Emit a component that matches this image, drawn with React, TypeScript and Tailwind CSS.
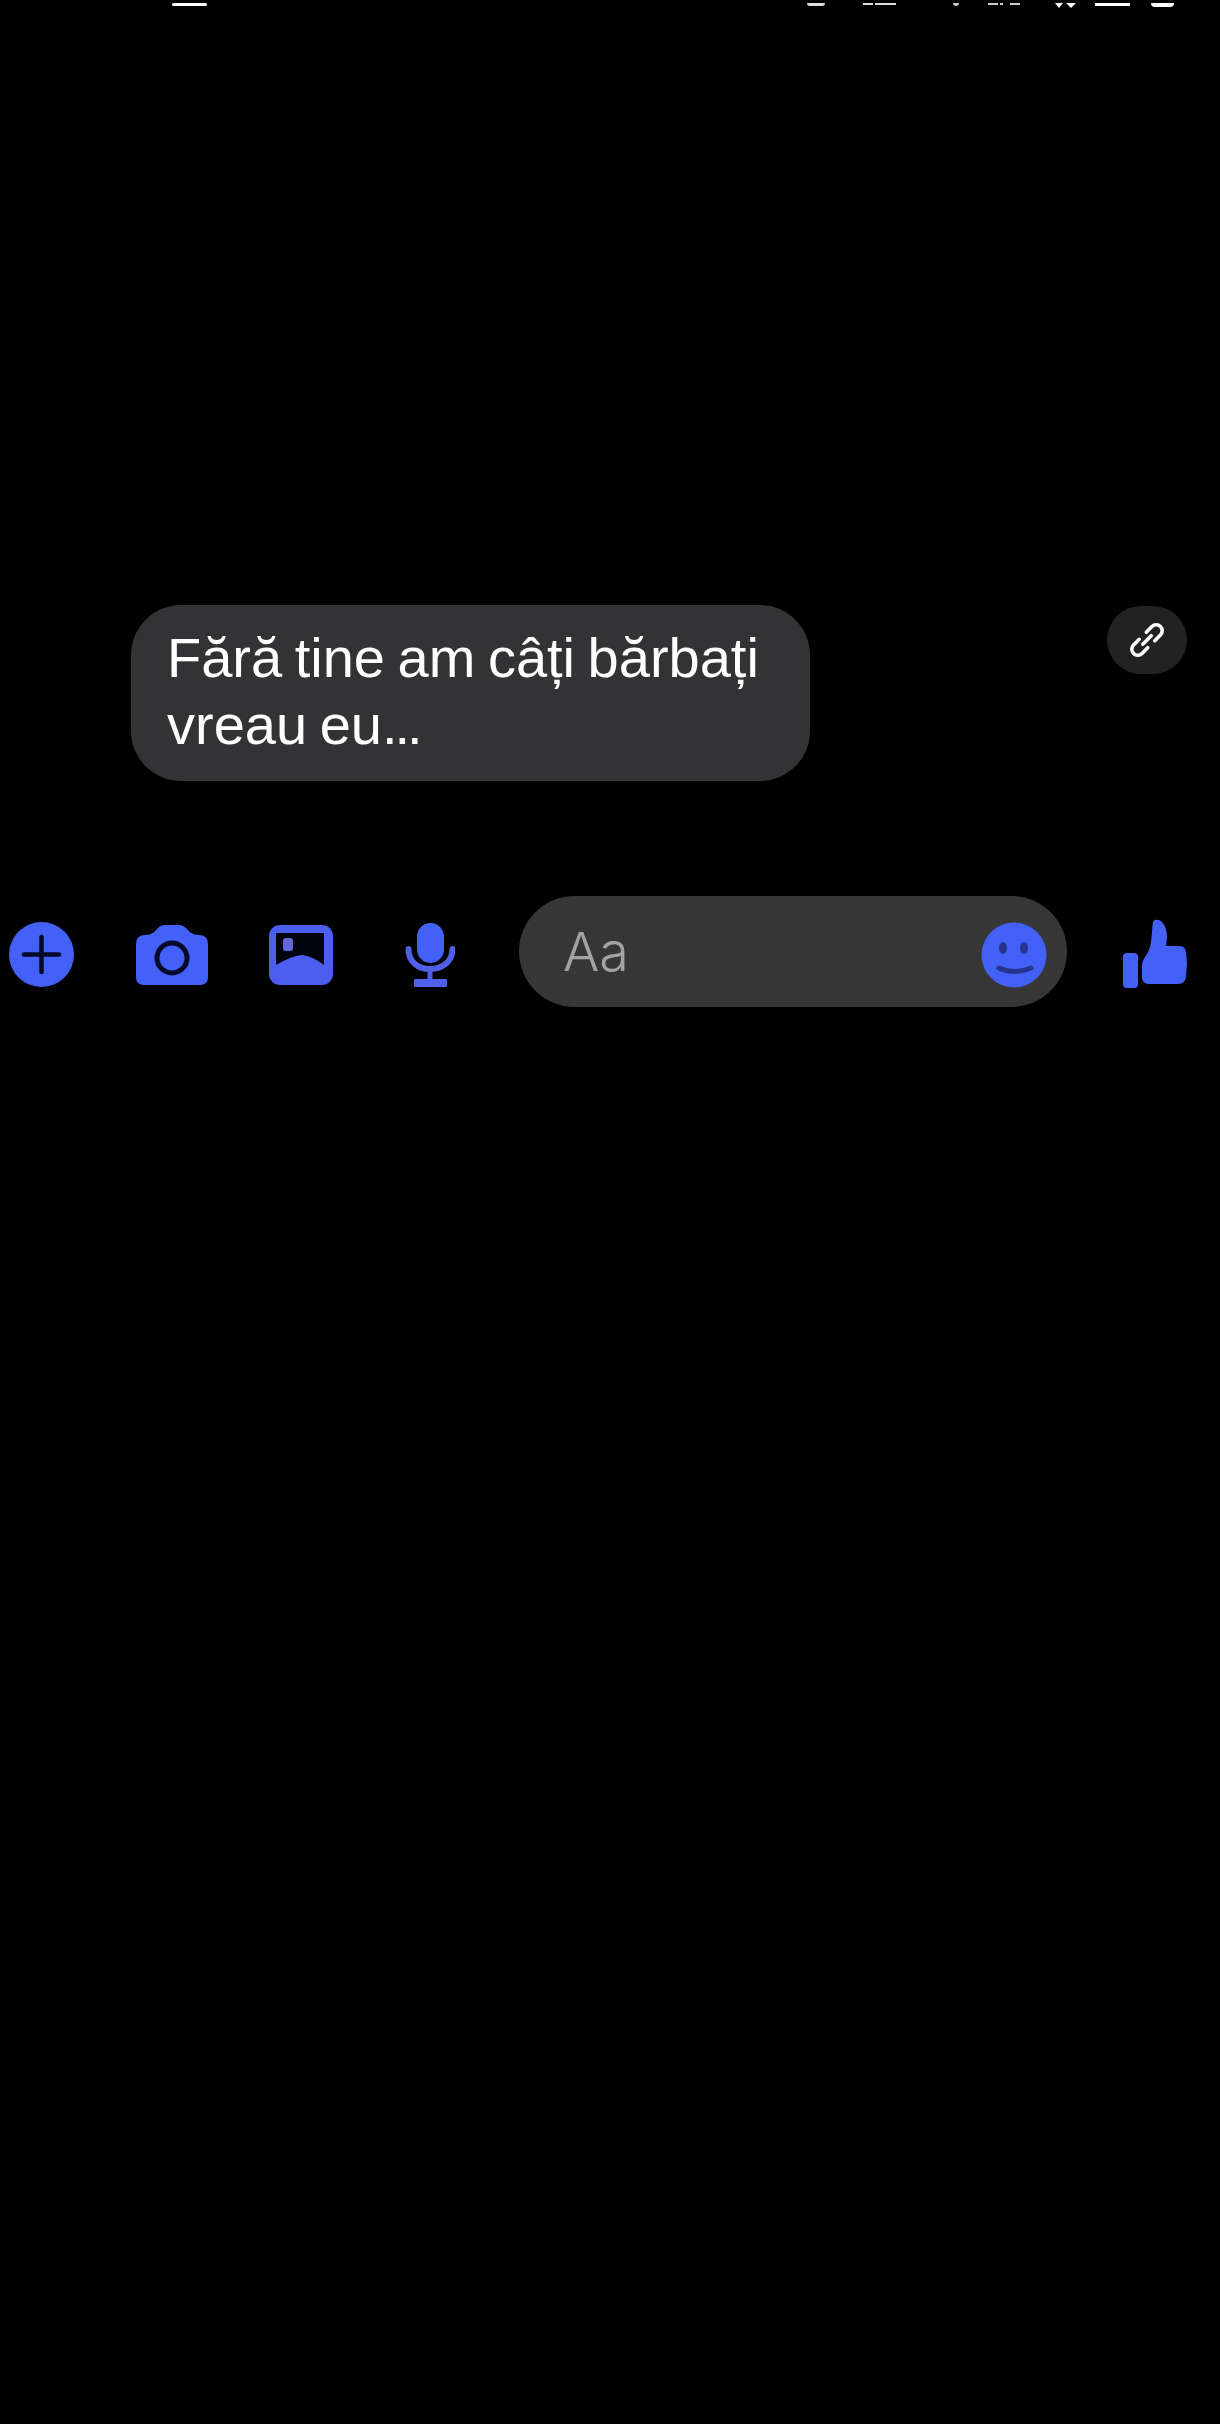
const blue = "#4360f7";

function PlusIcon() {
  return (
    <svg width="66" height="66" viewBox="0 0 66 66">
      <circle cx="32.5" cy="32.5" r="32.5" fill={blue} />
      <path d="M15 32.5H50M32.5 15V50" stroke="#050a2a" strokeWidth="4.5" strokeLinecap="round" />
    </svg>
  );
}

function CameraIcon() {
  return (
    <svg width="72" height="60" viewBox="0 0 72 60">
      <path
        d="M9 10C14 10 18 8 21 4Q24 0 29 0H43Q47 0 51 4C54 8 58 10 63 10Q72 10 72 19V52Q72 60 64 60H8Q0 60 0 52V19Q0 10 9 10Z"
        fill={blue}
      />
      <circle cx="36" cy="33" r="15" fill="none" stroke="#050a2a" strokeWidth="5" />
    </svg>
  );
}

function ImageIcon() {
  return (
    <svg width="64" height="60" viewBox="0 0 64 60">
      <rect width="64" height="60" rx="11" fill="#4b5ef0" />
      <path d="M7 8H55V40Q43 31 33 30Q22 31 7 40Z" fill="#03030f" />
      <rect x="14" y="13" width="10" height="13" rx="3" fill="#6268d8" />
    </svg>
  );
}

function MicIcon() {
  return (
    <svg width="50" height="66" viewBox="0 0 50 66">
      <rect x="12" y="1" width="27" height="40" rx="13.5" fill={blue} />
      <path d="M3.5 27C3.5 39 12 47 25 47C38 47 47.5 39 47.5 27" fill="none" stroke="#4f5fe8" strokeWidth="6" strokeLinecap="round" />
      <path d="M25 47V58" stroke="#4f5fe8" strokeWidth="5" />
      <rect x="9" y="57" width="33" height="8" rx="1" fill="#4f5fe8" />
    </svg>
  );
}

function SmileIcon() {
  return (
    <svg width="66" height="66" viewBox="0 0 66 66">
      <circle cx="33" cy="33" r="32.5" fill={blue} />
      <ellipse cx="22" cy="26" rx="4" ry="6" fill="#27348f" />
      <ellipse cx="43" cy="26" rx="4" ry="6" fill="#27348f" />
      <path d="M18 46Q33 53 50 46" fill="none" stroke="#27348f" strokeWidth="5" strokeLinecap="round" />
    </svg>
  );
}

function ThumbIcon() {
  return (
    <svg width="66" height="70" viewBox="0 0 66 70">
      <rect x="1" y="34" width="15" height="35" rx="4" fill={blue} />
      <path
        d="M20 46C20 40 26 36 28 28C30 20 30 8 31 3Q32 0 37 1C42 3 45 10 45 18L44 27H58Q63 27 64 33L65 44L64 58Q63 65 56 65H27Q20 65 20 58Z"
        fill={blue}
      />
    </svg>
  );
}

function LinkIcon() {
  return (
    <svg width="40" height="40" viewBox="0 0 40 40" fill="none" stroke="#ffffff" strokeWidth="3.6" strokeLinecap="round">
      <g transform="rotate(-45 20 20)">
        <path d="M15 14H7a6 6 0 0 0 0 12H15" />
        <path d="M25 14H33a6 6 0 0 1 0 12H25" />
        <path d="M14 20H26" />
      </g>
    </svg>
  );
}

export default function App() {
  return (
    <div className="w-[1220px] h-[2424px] bg-black overflow-hidden font-['Inter',sans-serif]">
      {/* status bar, cropped off by the top edge */}
      <div className="flex h-[605px] items-start pt-[3px] blur-[0.6px]">
        <div className="ml-[172px] h-[3px] w-[35px] rounded-full bg-white" />
        <div className="ml-[600px] h-[3px] w-[18px] rounded-b-full bg-[#dddddd]" />
        <div className="ml-[38px] h-[2px] w-[10px] bg-[#dddddd]" />
        <div className="ml-[2px] h-[2px] w-[21px] bg-[#dddddd]" />
        <div className="ml-[57px] h-[3px] w-[6px] rounded-b-full bg-[#cccccc]" />
        <div className="ml-[29px] h-[2px] w-[10px] bg-[#cccccc]" />
        <div className="ml-[2px] h-[2px] w-[3px] bg-[#cccccc]" />
        <div className="ml-[7px] h-[2px] w-[10px] bg-[#cccccc]" />
        <div className="ml-[35px] h-0 w-0 border-x-[4px] border-t-[5px] border-x-transparent border-t-white" />
        <div className="ml-[3px] h-0 w-0 border-x-[5px] border-t-[5px] border-x-transparent border-t-white" />
        <div className="ml-[19px] h-[3px] w-[35px] bg-white" />
        <div className="ml-[21px] h-[4px] w-[23px] rounded-b-[4px] bg-white" />
      </div>

      <div className="flex items-start pl-[131px] pr-[33px]">
        <div className="h-[176px] w-[679px] rounded-[50px] bg-[#333335] pl-[36px] pt-[19px] font-['Liberation_Sans',sans-serif] text-[56px] leading-[67px] text-white [word-spacing:-3px]">
          Fără tine am câți bărbați
          <br />
          vreau eu<span className="tracking-[-3px]">...</span>
        </div>
        <div className="ml-auto mt-px flex h-[68px] w-[80px] items-center justify-center rounded-full bg-[#222222]">
          <LinkIcon />
        </div>
      </div>

      <div className="mt-[115px] flex h-[111px] items-center pl-[9px]">
        <div className="mt-[6px]">
          <PlusIcon />
        </div>
        <div className="ml-[61px] mt-[6px]">
          <CameraIcon />
        </div>
        <div className="ml-[61px] mt-[6px]">
          <ImageIcon />
        </div>
        <div className="ml-[72px] mt-[6px]">
          <MicIcon />
        </div>
        <div className="ml-[64px] flex h-[111px] w-[548px] items-center rounded-full bg-[#363637] pl-[44px] pr-[20px]">
          <span className="text-[54px] font-light text-[#a3a3a3]">Aa</span>
          <div className="ml-auto mt-[6px]">
            <SmileIcon />
          </div>
        </div>
        <div className="ml-[55px] mt-[4px]">
          <ThumbIcon />
        </div>
      </div>
    </div>
  );
}
